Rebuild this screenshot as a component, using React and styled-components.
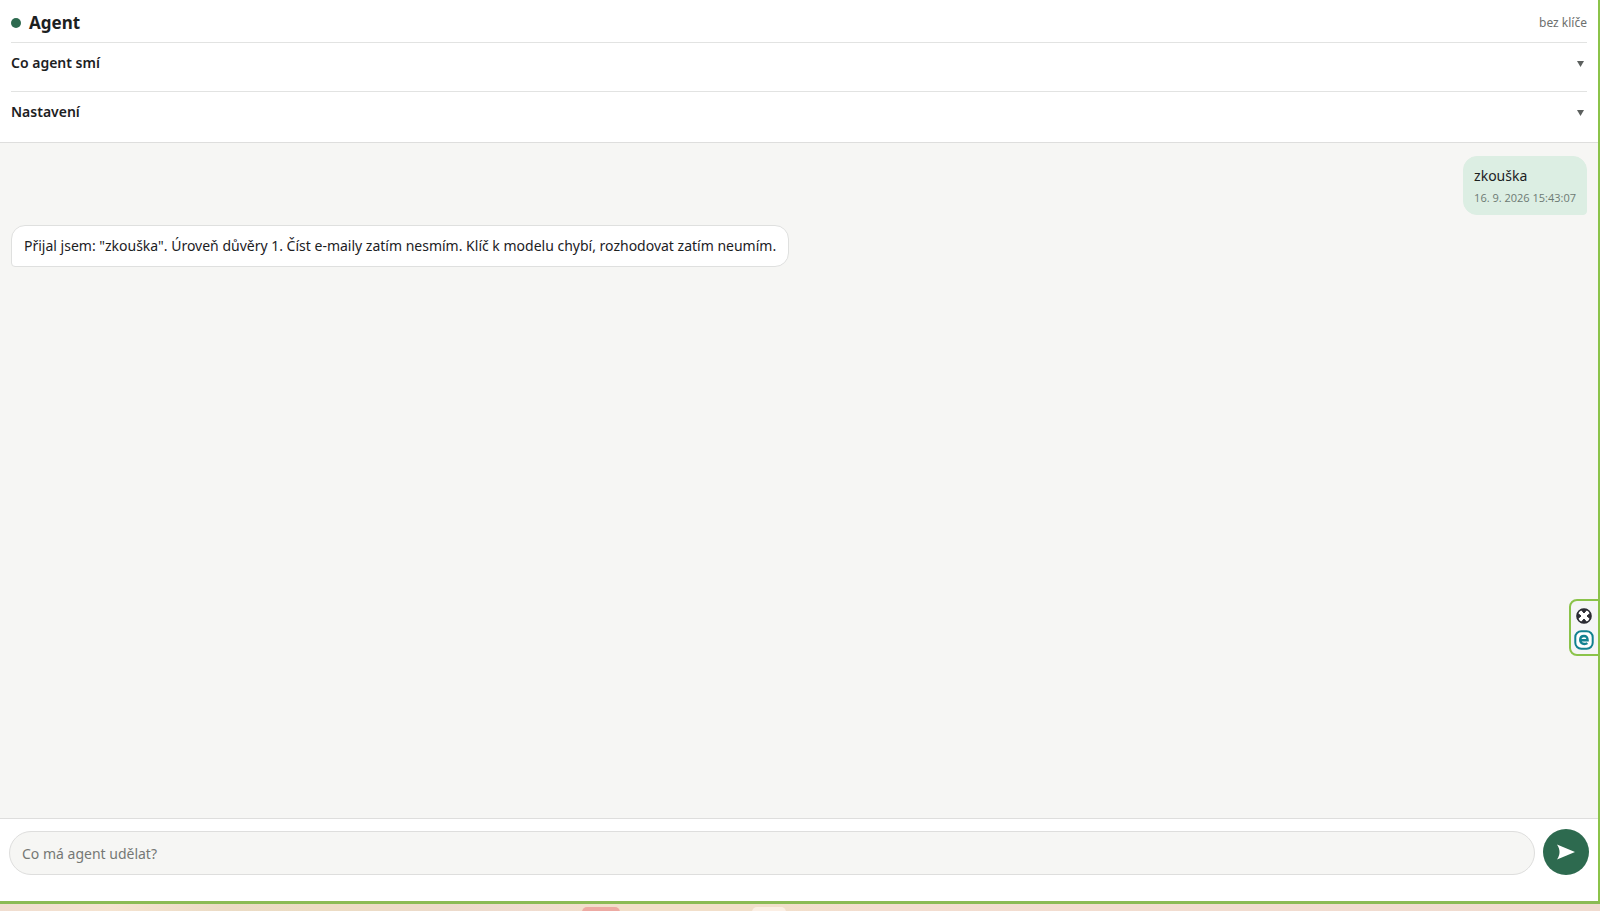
import React, { useState } from 'react'
import styled, { createGlobalStyle } from 'styled-components'

const GlobalStyle = createGlobalStyle`
* {
    box-sizing: border-box;
}
body {
    margin: 0;
    background-color: #f2dfd0;
    color: #1c211f;
    font-family: "Noto Sans", "Open Sans", sans-serif;
    font-size: 14px;
}
`

const Desktop = styled.div`
display: flex;
flex-direction: column;
height: 100vh;
`

const Window = styled.div`
position: relative;
flex: 1;
min-height: 0;
display: flex;
flex-direction: column;
background-color: #f6f6f4;
border-right: 2px solid #8bc34a;
border-bottom: 3px solid #8bbb55;
`

const Header = styled.header`
background-color: #fff;
padding: 0 11px;
border-bottom: 1px solid #dededd;
`

const TitleRow = styled.div`
display: flex;
align-items: center;
gap: 8px;
height: 42px;
padding-top: 4px;
`

const StatusDot = styled.span`
width: 10px;
height: 10px;
border-radius: 50%;
background-color: #2d6a4f;
`

const Title = styled.h1`
flex: 1;
margin: 0;
font-size: 17px;
line-height: 24px;
font-weight: 700;
`

const KeyState = styled.span`
font-size: 12px;
line-height: 24px;
color: #6d706e;
`

const Section = styled.section`
border-top: 1px solid #e2e3e2;
`

const SectionButton = styled.button`
display: flex;
align-items: flex-start;
justify-content: space-between;
width: 100%;
height: ${({ $last }) => ($last ? 50 : 48)}px;
padding: 10px 3px 0 0;
border: none;
background: none;
color: inherit;
font: inherit;
font-weight: 600;
line-height: 20px;
text-align: left;
cursor: pointer;
`

const Arrow = styled.svg`
width: 7px;
height: 20px;
fill: #5c605e;
`

const Messages = styled.main`
flex: 1;
min-height: 0;
overflow-y: auto;
display: flex;
flex-direction: column;
align-items: flex-start;
gap: 10px;
padding: 13px 11px;
`

const Bubble = styled.div`
padding: ${({ $mine }) => ($mine ? '8px 10px 5px' : '9px 12px')};
border: 1px solid ${({ $mine }) => ($mine ? '#dceee3' : '#dfe0df')};
border-radius: ${({ $mine }) => ($mine ? '14px 14px 4px 14px' : '14px 14px 14px 4px')};
background-color: ${({ $mine }) => ($mine ? '#dceee3' : '#fff')};
align-self: ${({ $mine }) => ($mine ? 'flex-end' : 'flex-start')};
line-height: 22px;
`

const Time = styled.time`
display: block;
font-family: "Open Sans", sans-serif;
font-size: 11px;
line-height: 22px;
color: #6d7a73;
`

const Composer = styled.form`
display: flex;
align-items: flex-end;
gap: 8px;
padding: 10px 9px 26px;
background-color: #fff;
border-top: 1px solid #dededd;
`

const TaskInput = styled.input`
flex: 1;
min-width: 0;
height: 44px;
padding: 0 12px;
border: 1px solid #dededd;
border-radius: 22px;
outline: none;
background-color: #f6f6f4;
color: inherit;
font: inherit;
&::placeholder {
    color: #757875;
    opacity: 1;
}
`

const SendButton = styled.button`
display: grid;
place-items: center;
width: 46px;
height: 46px;
padding: 0;
border: none;
border-radius: 50%;
background-color: #2d6a4f;
cursor: pointer;
`

/* floating extension handle on the window edge */
const EdgeWidget = styled.aside`
position: absolute;
right: -2px;
top: 599px;
display: flex;
flex-direction: column;
align-items: center;
gap: 4px;
padding: 5px 4px 4px 3px;
border: 2px solid #8bc34a;
border-radius: 8px 0 0 8px;
background-color: #f5f5f6;
`

const WidgetButton = styled.button`
display: block;
height: 20px;
padding: 0;
border: none;
background: none;
cursor: pointer;
`

const Taskbar = styled.footer`
display: flex;
height: 7px;
padding-top: 3px;
overflow: hidden;
background: linear-gradient(90deg, #f0ddd0 0%, #f5e3d0 7%, #ebdbc5 14%, #ecdcc3 20%, #ecdacb 28%, #f0dcd0 33%, #f2dfca 38%, #f2dfca 48%, #f3ddd0 55%, #f0dbd0 100%);
`

const TaskbarItem = styled.span`
width: ${({ $wide }) => ($wide ? 38 : 34)}px;
height: 12px;
margin-left: ${({ $wide }) => ($wide ? '36.4%' : '8.2%')};
border-radius: 5px;
background-color: ${({ $wide }) => ($wide ? '#edaaa3' : '#fcefe5')};
`

const DownArrow = () => (
    <Arrow viewBox="0 0 7 20" aria-hidden="true">
        <path d="M0 8h7L3.5 14z" />
    </Arrow>
)

const App = () => {
    const [task, setTask] = useState('')

    return (
        <Desktop>
            <GlobalStyle />
            <Window>
                <Header>
                    <TitleRow>
                        <StatusDot />
                        <Title>Agent</Title>
                        <KeyState>bez klíče</KeyState>
                    </TitleRow>
                    <Section>
                        <SectionButton type="button" aria-expanded="false">
                            Co agent smí
                            <DownArrow />
                        </SectionButton>
                    </Section>
                    <Section>
                        <SectionButton type="button" aria-expanded="false" $last>
                            Nastavení
                            <DownArrow />
                        </SectionButton>
                    </Section>
                </Header>

                <Messages>
                    <Bubble $mine>
                        zkouška
                        <Time dateTime="2026-09-16T15:43:07">16. 9. 2026 15:43:07</Time>
                    </Bubble>
                    <Bubble>
                        Přijal jsem: "zkouška". Úroveň důvěry 1. Číst e-maily zatím nesmím. Klíč k modelu chybí, rozhodovat zatím neumím.
                    </Bubble>
                </Messages>

                <Composer onSubmit={(e) => e.preventDefault()}>
                    <TaskInput
                        type="text"
                        aria-label="Co má agent udělat?"
                        placeholder="Co má agent udělat?"
                        value={task}
                        onChange={(e) => setTask(e.target.value)}
                    />
                    <SendButton type="submit" aria-label="Odeslat">
                        <svg width="18" height="16" viewBox="0 0 18 16">
                            <path d="M0 0.5L18 8L0 15.5C3.4 10.5 3.4 5.5 0 0.5z" fill="#fff" />
                        </svg>
                    </SendButton>
                </Composer>

                <EdgeWidget>
                    <WidgetButton type="button" aria-label="Zavřít">
                        <svg width="20" height="20" viewBox="0 0 20 20" fill="none">
                            <circle cx="10" cy="10" r="7" fill="#fff" stroke="#2b2b33" strokeWidth="1.6" />
                            <path d="M7 3.4L10 7L13 3.4zM7 16.6L10 13L13 16.6zM3.4 7L7 10L3.4 13zM16.6 7L13 10L16.6 13z" fill="#2b2b33" stroke="#2b2b33" />
                        </svg>
                    </WidgetButton>
                    <WidgetButton type="button" aria-label="Otevřít panel">
                        <svg width="20" height="20" viewBox="0 0 20 20" fill="none">
                            <rect x="1.3" y="1.3" width="17.4" height="17.4" rx="6" fill="#fff" stroke="#128190" strokeWidth="2" />
                            <path d="M6.2 10.2H13.6C13.6 7.4 12.2 6 10 6C7.8 6 6.2 7.6 6.2 10C6.2 12.6 8 14 10.3 14C11.4 14 12.6 13.7 13.4 13.1" stroke="#128190" strokeWidth="2.4" />
                        </svg>
                    </WidgetButton>
                </EdgeWidget>
            </Window>
            <Taskbar>
                <TaskbarItem $wide />
                <TaskbarItem />
            </Taskbar>
        </Desktop>
    )
}

export default App
